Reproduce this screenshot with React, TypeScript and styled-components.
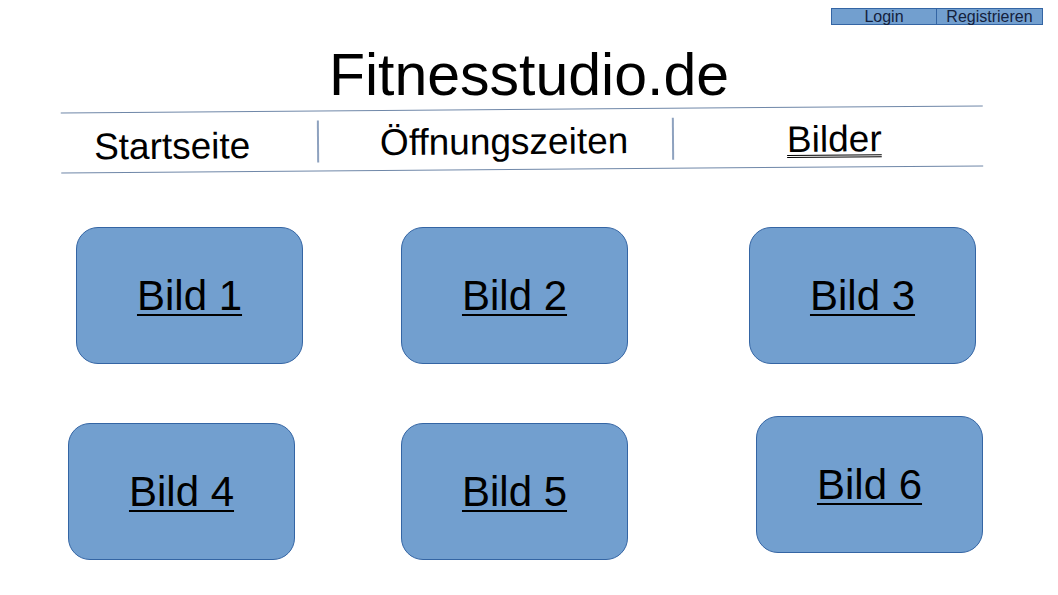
import React from 'react';
import styled, { createGlobalStyle } from 'styled-components';

const fill = '#729fcf';
const stroke = '#3465a4';
const line = '#6f87a8';

const GlobalStyle = createGlobalStyle`
  html, body {
    margin: 0;
    padding: 0;
    background: #ffffff;
  }
  body {
    font-family: 'Liberation Sans', Arial, sans-serif;
    color: #000000;
  }
`;

const Page = styled.div`
  width: 1058px;
  height: 595px;
  overflow: hidden;
`;

const TopBar = styled.div`
  height: 41px;
  padding-top: 8px;
  box-sizing: border-box;
  display: flex;
  justify-content: flex-end;
  padding-right: 15px;
`;

const AuthBox = styled.div`
  display: flex;
  height: 17px;
  background: ${fill};
  border: 1px solid ${stroke};
  box-sizing: border-box;
`;

const AuthLink = styled.a`
  width: 104px;
  font-size: 16px;
  line-height: 15px;
  text-align: center;
  color: #14213d;
  text-decoration: none;
  & + & {
    width: 105px;
    border-left: 1px solid ${stroke};
  }
`;

const Title = styled.h1`
  margin: 0;
  height: 68px;
  font-size: 59px;
  line-height: 68px;
  font-weight: 400;
  text-align: center;
`;

const Nav = styled.nav`
  margin-left: 61px;
  width: 922px;
  height: 61px;
  box-sizing: border-box;
  border-top: 1.5px solid ${line};
  border-bottom: 1.5px solid ${line};
  display: flex;
  align-items: center;
  transform: rotate(-0.45deg);
`;

const NavItem = styled.a<{ $width: number; $indent: number; $drop?: number; $double?: boolean }>`
  width: ${(p) => p.$width}px;
  padding-left: ${(p) => p.$indent}px;
  padding-top: ${(p) => p.$drop ?? 5}px;
  box-sizing: border-box;
  font-size: 37px;
  line-height: 40px;
  color: #000000;
  text-decoration: ${(p) => (p.$double ? 'underline double' : 'none')};
  text-decoration-thickness: 1px;
  text-underline-offset: 3px;
  white-space: nowrap;
`;

const Divider = styled.span`
  width: 2px;
  height: 42px;
  background: #8ea2bf;
  flex: none;
`;

const Gallery = styled.section`
  padding-top: 57px;
`;

const Row = styled.div<{ $gap: number }>`
  display: flex;
  align-items: flex-start;
  margin-top: ${(p) => p.$gap}px;
`;

const Card = styled.a<{ $x: number; $y?: number }>`
  flex: none;
  width: 227px;
  height: 137px;
  margin-left: ${(p) => p.$x}px;
  margin-top: ${(p) => p.$y ?? 0}px;
  box-sizing: border-box;
  background: ${fill};
  border: 1px solid ${stroke};
  border-radius: 22px;
  display: flex;
  align-items: center;
  justify-content: center;
  font-size: 42px;
  color: #000000;
  text-decoration: underline;
  text-decoration-thickness: 2px;
  text-underline-offset: 4px;
`;

const rows = [
  { gap: 0, cards: [{ label: 'Bild 1', x: 76 }, { label: 'Bild 2', x: 98 }, { label: 'Bild 3', x: 121 }] },
  {
    gap: 52,
    cards: [
      { label: 'Bild 4', x: 68, y: 7 },
      { label: 'Bild 5', x: 106, y: 7 },
      { label: 'Bild 6', x: 128 },
    ],
  },
];

const App: React.FC = () => {
  return (
    <Page>
      <GlobalStyle />
      <TopBar>
        <AuthBox>
          <AuthLink href="#">Login</AuthLink>
          <AuthLink href="#">Registrieren</AuthLink>
        </AuthBox>
      </TopBar>
      <Title>Fitnesstudio.de</Title>
      <Nav>
        <NavItem href="#" $width={256} $indent={33} $drop={8}>
          Startseite
        </NavItem>
        <Divider />
        <NavItem href="#" $width={353} $indent={61}>
          Öffnungszeiten
        </NavItem>
        <Divider />
        <NavItem href="#" $width={300} $indent={113} $double>
          Bilder
        </NavItem>
      </Nav>
      <Gallery>
        {rows.map((row, i) => (
          <Row key={i} $gap={row.gap}>
            {row.cards.map((c) => (
              <Card key={c.label} href="#" $x={c.x} $y={c.y}>
                {c.label}
              </Card>
            ))}
          </Row>
        ))}
      </Gallery>
    </Page>
  );
};

export default App;
